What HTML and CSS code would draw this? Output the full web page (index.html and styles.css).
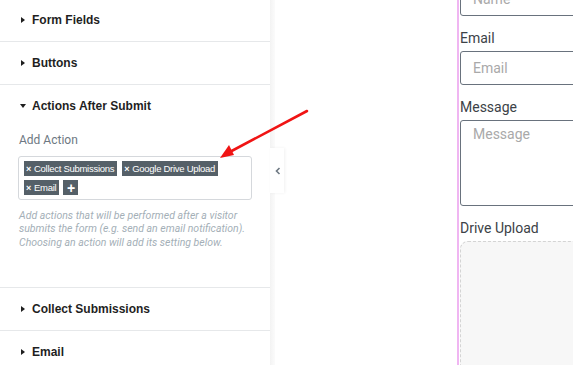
FILE: index.html
```html
<!DOCTYPE html>
<html lang="en">
<head>
    <meta charset="UTF-8">
    <meta name="viewport" content="width=device-width, initial-scale=1.0">
    <title>Form - Actions After Submit</title>
    <link rel="stylesheet" href="styles.css">
</head>
<body>
    <div class="editor">
        <!-- Settings panel -->
        <aside class="panel">
            <div class="section">
                <div class="section-head"><span class="caret"></span>Form Fields</div>
            </div>
            <div class="section">
                <div class="section-head"><span class="caret"></span>Buttons</div>
            </div>
            <div class="section">
                <div class="section-head"><span class="caret open"></span>Actions After Submit</div>
                <div class="section-body">
                    <div class="control-label">Add Action</div>
                    <div class="tag-box">
                        <span class="tag"><span class="tag-x">×</span>Collect Submissions</span>
                        <span class="tag"><span class="tag-x">×</span>Google Drive Upload</span>
                        <span class="tag"><span class="tag-x">×</span>Email</span>
                        <span class="tag tag-add">+</span>
                    </div>
                    <p class="help">
                        Add actions that will be performed after a visitor
                        submits the form (e.g. send an email notification).
                        Choosing an action will add its setting below.
                    </p>
                </div>
            </div>
            <div class="section">
                <div class="section-head"><span class="caret"></span>Collect Submissions</div>
            </div>
            <div class="section">
                <div class="section-head"><span class="caret"></span>Email</div>
            </div>
        </aside>

        <div class="panel-edge">
            <div class="collapse-tab">
                <svg width="6" height="8" viewBox="0 0 6 8"><path d="M4.5 1 L1.5 4 L4.5 7" fill="none" stroke="#6d7882" stroke-width="1.6"/></svg>
            </div>
        </div>

        <!-- Preview canvas -->
        <main class="canvas">
            <form class="form">
                <div class="field">
                    <input class="input" type="text" placeholder="Name">
                </div>
                <div class="field">
                    <label class="label">Email</label>
                    <input class="input" type="text" placeholder="Email">
                </div>
                <div class="field">
                    <label class="label">Message</label>
                    <textarea class="input textarea" placeholder="Message"></textarea>
                </div>
                <div class="field">
                    <label class="label">Drive Upload</label>
                    <div class="dropzone"></div>
                </div>
            </form>
        </main>

        <!-- annotation arrow -->
        <svg class="arrow" width="100" height="60" viewBox="0 0 100 60">
            <line x1="93" y1="7" x2="12" y2="50" stroke="#f01414" stroke-width="2.6" stroke-linecap="round"/>
            <polygon points="6,54 15,41 20,51" fill="#f01414"/>
        </svg>
    </div>
</body>
</html>
```

FILE: styles.css
```css
* {
    margin: 0;
    padding: 0;
    box-sizing: border-box;
}

body {
    font-family: 'Roboto', 'Liberation Sans', sans-serif;
    background: #ffffff;
    overflow: hidden;
    width: 573px;
    height: 365px;
}

.editor {
    display: flex;
    position: relative;
    height: 365px;
}

/* Settings panel */
.panel {
    width: 270px;
    flex-shrink: 0;
    background: #ffffff;
    margin-top: -1px;
}

.section {
    border-bottom: 1px solid #e6e8ea;
}

.section-head {
    height: 42px;
    display: flex;
    align-items: center;
    padding-left: 21px;
    font-family: 'Liberation Sans', Arial, sans-serif;
    font-size: 12px;
    font-weight: bold;
    color: #1f1f1f;
}

.caret {
    width: 0;
    height: 0;
    border-top: 3px solid transparent;
    border-bottom: 3px solid transparent;
    border-left: 4px solid #1f1f1f;
    margin-right: 7px;
}

.caret.open {
    border-left: 3px solid transparent;
    border-right: 3px solid transparent;
    border-top: 4px solid #1f1f1f;
    border-bottom: 0;
    margin-left: -1px;
    margin-right: 6px;
}

.section-body {
    height: 160px;
    padding: 5px 18px 0 18px;
}

.control-label {
    font-size: 12px;
    line-height: 16px;
    color: #6d7882;
    padding-left: 1px;
}

.tag-box {
    margin-top: 8px;
    border: 1px solid #d5d8dc;
    border-radius: 3px;
    padding: 4px 5px 4px 5px;
    height: 44px;
    display: flex;
    flex-wrap: wrap;
    align-content: flex-start;
    gap: 4px 5px;
}

.tag {
    height: 15px;
    background: #556068;
    color: #ffffff;
    font-family: 'Liberation Sans', Arial, sans-serif;
    font-size: 9.5px;
    letter-spacing: -0.28px;
    padding: 0 3px 0 2px;
    display: flex;
    align-items: center;
}

.tag-x {
    font-size: 9px;
    font-weight: bold;
    margin-right: 3px;
}

.tag-add {
    width: 15px;
    justify-content: center;
    font-size: 14px;
    font-weight: bold;
    padding: 0;
    margin-left: -1px;
}

.help {
    margin-top: 9px;
    padding-left: 1px;
    font-size: 10.5px;
    line-height: 13.4px;
    font-style: italic;
    color: #a4afb7;
}

/* Panel edge with collapse tab */
.panel-edge {
    width: 5px;
    flex-shrink: 0;
    background: linear-gradient(90deg, #f3f3f3, #fbfbfb);
    position: relative;
}

.collapse-tab {
    position: absolute;
    left: 0;
    top: 148px;
    width: 14px;
    height: 45px;
    background: #ffffff;
    box-shadow: 1px 0 3px rgba(0, 0, 0, 0.06);
    display: flex;
    align-items: center;
    justify-content: center;
    padding-left: 1px;
}

/* Preview canvas */
.canvas {
    flex: 1;
    padding-left: 182px;
    overflow: hidden;
}

.form {
    width: 220px;
    margin-top: -18px;
    border-left: 2px solid #f0b6f2;
    padding-left: 1px;
    height: 400px;
}

.field {
    display: flex;
    flex-direction: column;
    margin-bottom: 12px;
}

.label {
    font-size: 14px;
    line-height: 20px;
    color: #3c4247;
    margin-bottom: 3px;
}

.input {
    height: 34px;
    border: 1px solid #69727d;
    border-radius: 3px;
    padding: 0 12px;
    font-family: 'Roboto', sans-serif;
    font-size: 14px;
    color: #333333;
    background: #ffffff;
    outline: none;
}

.input::placeholder {
    color: #a9a9a9;
}

.textarea {
    height: 86px;
    padding-top: 5px;
    resize: none;
}

.dropzone {
    height: 140px;
    border: 1px dashed #d4d4d4;
    border-radius: 8px;
    background: #f7f7f7;
}

/* Annotation */
.arrow {
    position: absolute;
    left: 214px;
    top: 104px;
}
```
